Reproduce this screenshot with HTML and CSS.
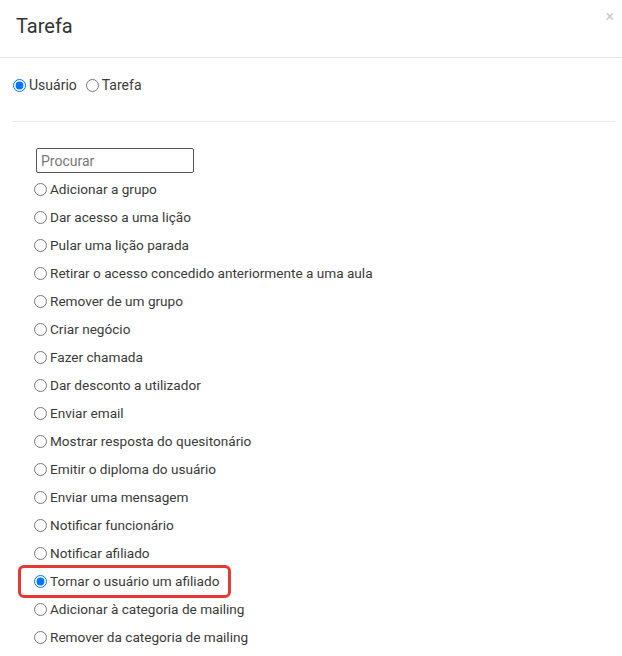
FILE: index.html
```html
<!DOCTYPE html>
<html lang="pt">
<head>
<meta charset="utf-8">
<title>Tarefa</title>
<link rel="stylesheet" href="styles.css">
</head>
<body>
<div class="modal">
  <div class="modal-header">
    <h4 class="title">Tarefa</h4>
    <span class="close">×</span>
  </div>
  <div class="modal-body">
    <div class="type-row">
      <label class="opt"><input type="radio" name="type" checked>Usuário</label>
      <label class="opt"><input type="radio" name="type">Tarefa</label>
    </div>
    <hr class="sep">
    <div class="actions">
      <input class="search" type="text" placeholder="Procurar">
      <label class="row"><input type="radio" name="act">Adicionar a grupo</label>
      <label class="row"><input type="radio" name="act">Dar acesso a uma lição</label>
      <label class="row"><input type="radio" name="act">Pular uma lição parada</label>
      <label class="row"><input type="radio" name="act">Retirar o acesso concedido anteriormente a uma aula</label>
      <label class="row"><input type="radio" name="act">Remover de um grupo</label>
      <label class="row"><input type="radio" name="act">Criar negócio</label>
      <label class="row"><input type="radio" name="act">Fazer chamada</label>
      <label class="row"><input type="radio" name="act">Dar desconto a utilizador</label>
      <label class="row"><input type="radio" name="act">Enviar email</label>
      <label class="row"><input type="radio" name="act">Mostrar resposta do quesitonário</label>
      <label class="row"><input type="radio" name="act">Emitir o diploma do usuário</label>
      <label class="row"><input type="radio" name="act">Enviar uma mensagem</label>
      <label class="row"><input type="radio" name="act">Notificar funcionário</label>
      <label class="row"><input type="radio" name="act">Notificar afiliado</label>
      <label class="row highlight"><input type="radio" name="act" checked>Tornar o usuário um afiliado</label>
      <label class="row"><input type="radio" name="act">Adicionar à categoria de mailing</label>
      <label class="row"><input type="radio" name="act">Remover da categoria de mailing</label>
    </div>
  </div>
</div>
</body>
</html>
```
FILE: styles.css
```css
* { box-sizing: border-box; }
html, body {
  margin: 0;
  padding: 0;
  background: #fff;
}
body {
  font-family: Roboto, "Liberation Sans", Arial, sans-serif;
  font-size: 13.6px;
  color: #3a3a3a;
  overflow: hidden;
}
.modal {
  width: 622px;
}
.modal-header {
  position: relative;
  height: 58px;
  border-bottom: 1px solid #e5e5e5;
  padding: 14px 16px 0;
}
.title {
  margin: 0;
  font-size: 20px;
  font-weight: normal;
  color: #333;
  line-height: 24px;
}
.close {
  position: absolute;
  right: 8px;
  top: 8px;
  font-size: 16px;
  line-height: 18px;
  color: #c8c8c8;
}
.modal-body {
  padding: 16px 7px 0 8px;
}
.type-row {
  display: flex;
  align-items: center;
  height: 22px;
  font-size: 14px;
}
.opt {
  display: flex;
  align-items: center;
  margin-right: 4px;
}
input[type="radio"] {
  width: 13px;
  height: 13px;
  margin: 0 3px 0 5px;
  flex: none;
}
.sep {
  margin: 25px 0 0 4px;
  border: 0;
  border-top: 1px solid #eaeaea;
  height: 0;
}
.actions {
  display: flex;
  flex-direction: column;
  align-items: flex-start;
  padding: 26px 0 0 21px;
}
.search {
  width: 158px;
  height: 25px;
  margin-left: 7px;
  margin-bottom: 2px;
  border: 1px solid #555;
  border-radius: 2px;
  padding: 0 4px;
  font-family: inherit;
  font-size: 14px;
  color: #444;
}
.search::placeholder { color: #777; }
.row {
  display: flex;
  align-items: center;
  height: 28px;
  padding-right: 4px;
}
.highlight {
  position: relative;
}
.highlight::after {
  content: "";
  position: absolute;
  left: -11px;
  top: -2px;
  right: -8px;
  bottom: -3px;
  border: 3.5px solid #e53935;
  border-radius: 6px;
}
```
